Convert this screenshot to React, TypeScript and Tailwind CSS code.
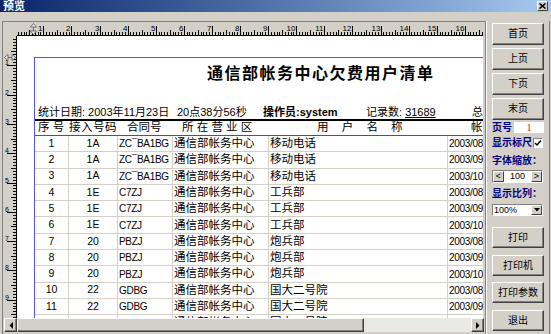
import React from "react"

const rows: string[][] = [
  ["1", "1A", "ZC¯BA1BG", "通信部帐务中心", "移动电话", "2003/08"],
  ["2", "1A", "ZC¯BA1BG", "通信部帐务中心", "移动电话", "2003/09"],
  ["3", "1A", "ZC¯BA1BG", "通信部帐务中心", "移动电话", "2003/10"],
  ["4", "1E", "C7ZJ", "通信部帐务中心", "工兵部", "2003/08"],
  ["5", "1E", "C7ZJ", "通信部帐务中心", "工兵部", "2003/09"],
  ["6", "1E", "C7ZJ", "通信部帐务中心", "工兵部", "2003/10"],
  ["7", "20", "PBZJ", "通信部帐务中心", "炮兵部", "2003/08"],
  ["8", "20", "PBZJ", "通信部帐务中心", "炮兵部", "2003/09"],
  ["9", "20", "PBZJ", "通信部帐务中心", "炮兵部", "2003/10"],
  ["10", "22", "GDBG", "通信部帐务中心", "国大二号院", "2003/08"],
  ["11", "22", "GDBG", "通信部帐务中心", "国大二号院", "2003/09"],
  ["12", "22", "GDBG", "通信部帐务中心", "国大二号院", "2003/10"],
]

function TopRuler() {
  const ticks = []
  const labels = []
  for (let i = 1; i <= 170; i++) {
    const x = Math.round(-1.8 + i * 2.81) + 0.5
    if (x > 466) break
    const h = i % 10 === 0 ? 9 : i % 5 === 0 ? 5 : 3
    ticks.push(<line key={i} x1={x} x2={x} y1={13} y2={13 - h} stroke="#000" strokeWidth={1} />)
    if (i % 10 === 0) {
      labels.push(
        <text key={"t" + i} x={x - 1} y={9} fontSize={8} textAnchor="end" fill="#000">
          {i / 10}
        </text>
      )
    }
  }
  return (
    <svg width={466} height={14} className="block">
      <line x1={0} x2={466} y1={13.5} y2={13.5} stroke="#000" strokeWidth={1} />
      {ticks}
      {labels}
      {/* margin marker */}
      <g stroke="#505050" strokeWidth={0.8} fill="#f0f0f0">
        <polygon points="16.5,1.5 13.5,5 19.5,5" />
        <line x1={16.5} x2={16.5} y1={5} y2={9} />
        <polygon points="13.5,9 19.5,9 16.5,12.5" />
      </g>
    </svg>
  )
}

function LeftRuler() {
  const ticks = []
  const labels = []
  for (let i = 1; i <= 100; i++) {
    const y = Math.round(i * 2.93) + 0.5
    if (y > 282) break
    const w = i % 10 === 0 ? 9 : i % 5 === 0 ? 5 : 3
    ticks.push(<line key={i} x1={13} x2={13 - w} y1={y} y2={y} stroke="#000" strokeWidth={1} />)
    if (i % 10 === 0) {
      labels.push(
        <text key={"t" + i} x={2} y={y - 1} fontSize={7} fill="#000">
          {i / 10}
        </text>
      )
    }
  }
  return (
    <svg width={14} height={282} className="block">
      <line x1={13.5} x2={13.5} y1={0} y2={282} stroke="#000" strokeWidth={1} />
      {ticks}
      {labels}
      <g stroke="#505050" strokeWidth={0.8} fill="#f0f0f0">
        <polygon points="1.5,21.5 5,18.5 5,24.5" />
        <line x1={5} x2={9} y1={21.5} y2={21.5} />
        <polygon points="9,18.5 9,24.5 12.5,21.5" />
      </g>
    </svg>
  )
}

function Btn({ label, h }: { label: string; h: string }) {
  return (
    <div
      className={`${h} w-[52px] flex items-center justify-center bg-[#d4d0c8] border border-t-white border-l-white border-r-[#404040] border-b-[#404040] shadow-[inset_-1px_-1px_0_#808080] text-[10px] leading-none whitespace-nowrap`}
    >
      {label}
    </div>
  )
}

function SmallBtn({ children }: { children: React.ReactNode }) {
  return (
    <div className="w-[11px] h-full shrink-0 flex items-center justify-center bg-[#d4d0c8] border border-t-white border-l-white border-r-[#404040] border-b-[#404040]">
      {children}
    </div>
  )
}

function SidePanel() {
  const label = "text-[10px] font-bold text-[#000080] leading-none whitespace-nowrap shrink-0"
  return (
    <div className="w-[64px] h-full border-l border-white border-r border-r-[#808080] pl-[5px] pt-[2px] flex flex-col">
      <Btn label="首页" h="h-[22px]" />
      <div className="mt-[3px]"><Btn label="上页" h="h-[22px]" /></div>
      <div className="mt-[3px]"><Btn label="下页" h="h-[22px]" /></div>
      <div className="mt-[3px]"><Btn label="末页" h="h-[22px]" /></div>

      <div className="mt-[1px] h-[13px] flex items-center w-[52px]">
        <span className={label}>页号</span>
        <div className="ml-auto w-[30px] h-[11px] shrink-0 bg-white flex items-center justify-center text-[10px] text-[#ff0000] leading-none font-['Liberation_Serif',serif]">
          1
        </div>
      </div>

      <div className="mt-[2px] h-[13px] flex items-center w-[52px]">
        <span className={label}>显示标尺</span>
        <div className="ml-auto mr-[1px] w-[10px] h-[10px] shrink-0 bg-white border border-t-[#808080] border-l-[#808080] border-r-white border-b-white flex items-center justify-center">
          <svg width={8} height={8} viewBox="0 0 8 8">
            <polyline points="1,4 3,6 7,1.5" fill="none" stroke="#000" strokeWidth={1.5} />
          </svg>
        </div>
      </div>

      <div className="mt-[5px] h-[13px] flex items-center">
        <span className={label}>字体缩放：</span>
      </div>

      <div className="mt-[3px] h-[13px] w-[51px] flex border border-t-[#808080] border-l-[#808080] border-r-white border-b-white bg-white">
        <SmallBtn>
          <span className="text-[9px] leading-none">&lt;</span>
        </SmallBtn>
        <div className="flex-1 flex items-center justify-center text-[9px] leading-none">100</div>
        <SmallBtn>
          <span className="text-[9px] leading-none">&gt;</span>
        </SmallBtn>
      </div>

      <div className="mt-[4px] h-[13px] flex items-center">
        <span className={label}>显示比列：</span>
      </div>

      <div className="mt-[4px] h-[12px] w-[51px] flex border border-t-[#808080] border-l-[#808080] border-r-white border-b-white bg-white">
        <div className="flex-1 flex items-center pl-[1px] text-[9px] leading-none">100%</div>
        <SmallBtn>
          <svg width={6} height={4} viewBox="0 0 6 4">
            <polygon points="0,0 6,0 3,3.5" fill="#000" />
          </svg>
        </SmallBtn>
      </div>

      <div className="mt-[11px]"><Btn label="打印" h="h-[21px]" /></div>
      <div className="mt-[7px]"><Btn label="打印机" h="h-[21px]" /></div>
      <div className="mt-[6px]"><Btn label="打印参数" h="h-[21px]" /></div>
      <div className="mt-[7px]"><Btn label="退出" h="h-[21px]" /></div>
    </div>
  )
}

function Page() {
  const cell = "flex items-center border-r border-[#d4d0c8] overflow-hidden whitespace-nowrap"
  return (
    <div className="ml-[17px] mt-[21px] w-[640px] border-l border-t border-[#5050ff] h-[400px]">
      <div className="pt-[6px] h-[26px] pl-[172px] text-[16px] leading-[20px] font-bold tracking-[1.5px] whitespace-nowrap">
        通信部帐务中心欠费用户清单
      </div>

      <div className="mt-[21px] h-[14px] flex items-center text-[11px] leading-[14px] whitespace-nowrap pl-[3px]">
        <span className="w-[139px] shrink-0">统计日期: 2003年11月23日</span>
        <span className="w-[86px] shrink-0">20点38分56秒</span>
        <span className="w-[103px] shrink-0 font-bold">操作员:system</span>
        <span className="w-[106px] shrink-0">
          记录数: <span className="underline">31689</span>
        </span>
        <span>总</span>
      </div>

      <div className="border-t-2 border-black">
        <div className="grid grid-cols-[34px_49px_55px_96px_179px_80px] h-[15px] border-b border-[#4040ff] text-[11.5px] leading-none whitespace-nowrap items-center">
          <div className="pl-[3px]">序 号</div>
          <div className="tracking-[0.5px]">接入号码</div>
          <div className="pl-[9px]">合同号</div>
          <div className="pl-[9px]">所 在 营 业 区</div>
          <div className="pl-[48px] tracking-[5px]">用 户 名 称</div>
          <div className="pl-[23px]">帐</div>
        </div>

        {rows.map((r) => (
          <div
            key={r[0]}
            className="grid grid-cols-[34px_49px_55px_96px_179px_80px] h-[16.3px] border-b border-[#d4d0c8]"
          >
            <div className={`${cell} justify-center text-[10.5px]`}>{r[0]}</div>
            <div className={`${cell} justify-center text-[10.5px]`}>{r[1]}</div>
            <div className={`${cell} pl-[1px] text-[10px] tracking-[-0.3px]`}>{r[2]}</div>
            <div className={`${cell} pl-[1px] text-[11.5px]`}>{r[3]}</div>
            <div className={`${cell} pl-[1px] text-[11.5px]`}>{r[4]}</div>
            <div className={`${cell} pl-[1px] text-[10px] tracking-[-0.3px]`}>{r[5]}</div>
          </div>
        ))}
      </div>
    </div>
  )
}

function ScrollBar() {
  return (
    <div className="col-span-3 flex h-[14px] ml-[1px] w-[480px]">
      <div className="w-[13px] h-full flex items-center justify-center bg-[#d4d0c8] border border-t-white border-l-white border-r-[#404040] border-b-[#404040] shadow-[inset_-1px_-1px_0_#808080]">
        <svg width={4} height={7} viewBox="0 0 4 7">
          <polygon points="4,0 4,7 0.5,3.5" fill="#000" />
        </svg>
      </div>
      <div className="w-[347px] h-full bg-[#d4d0c8] border border-t-white border-l-white border-r-[#404040] border-b-[#404040] shadow-[inset_-1px_-1px_0_#808080]" />
      <div className="flex-1 h-full bg-[#ebe9e4]" />
      <div className="w-[13px] h-full flex items-center justify-center bg-[#d4d0c8] border border-t-white border-l-white border-r-[#404040] border-b-[#404040] shadow-[inset_-1px_-1px_0_#808080]">
        <svg width={4} height={7} viewBox="0 0 4 7">
          <polygon points="0,0 0,7 3.5,3.5" fill="#000" />
        </svg>
      </div>
    </div>
  )
}

export default function App() {
  return (
    <div className="w-[551px] h-[334px] overflow-hidden bg-[#d4d0c8] flex flex-col text-black font-['Liberation_Sans','Noto_Sans_CJK_SC',sans-serif]">
      {/* title bar */}
      <div className="h-[12px] shrink-0 flex items-center bg-linear-to-r from-[#0a246a] to-[#a6caf0]">
        <span className="pl-[3px] text-[11px] font-bold text-white leading-none">预览</span>
        <div className="ml-auto mr-[3px] w-[11px] h-[10px] bg-[#d4d0c8] border border-t-white border-l-white border-r-[#404040] border-b-[#404040] flex items-center justify-center">
          <svg width={7} height={6} viewBox="0 0 7 6">
            <path d="M0.5 0.5 L6.5 5.5 M6.5 0.5 L0.5 5.5" stroke="#000" strokeWidth={1.6} />
          </svg>
        </div>
      </div>

      <div className="flex flex-1 min-h-0 pt-[9px]">
        <div className="ml-[2px] w-[484px] h-full border-l border-t border-r border-[#808080]">
          <div className="grid grid-cols-[14px_466px_2px] grid-rows-[14px_282px_14px]">
            <div />
            <div className="overflow-hidden">
              <TopRuler />
            </div>
            <div />
            <div className="overflow-hidden">
              <LeftRuler />
            </div>
            <div className="bg-white overflow-hidden">
              <Page />
            </div>
            <div />
            <ScrollBar />
          </div>
        </div>
        <SidePanel />
      </div>
    </div>
  )
}
